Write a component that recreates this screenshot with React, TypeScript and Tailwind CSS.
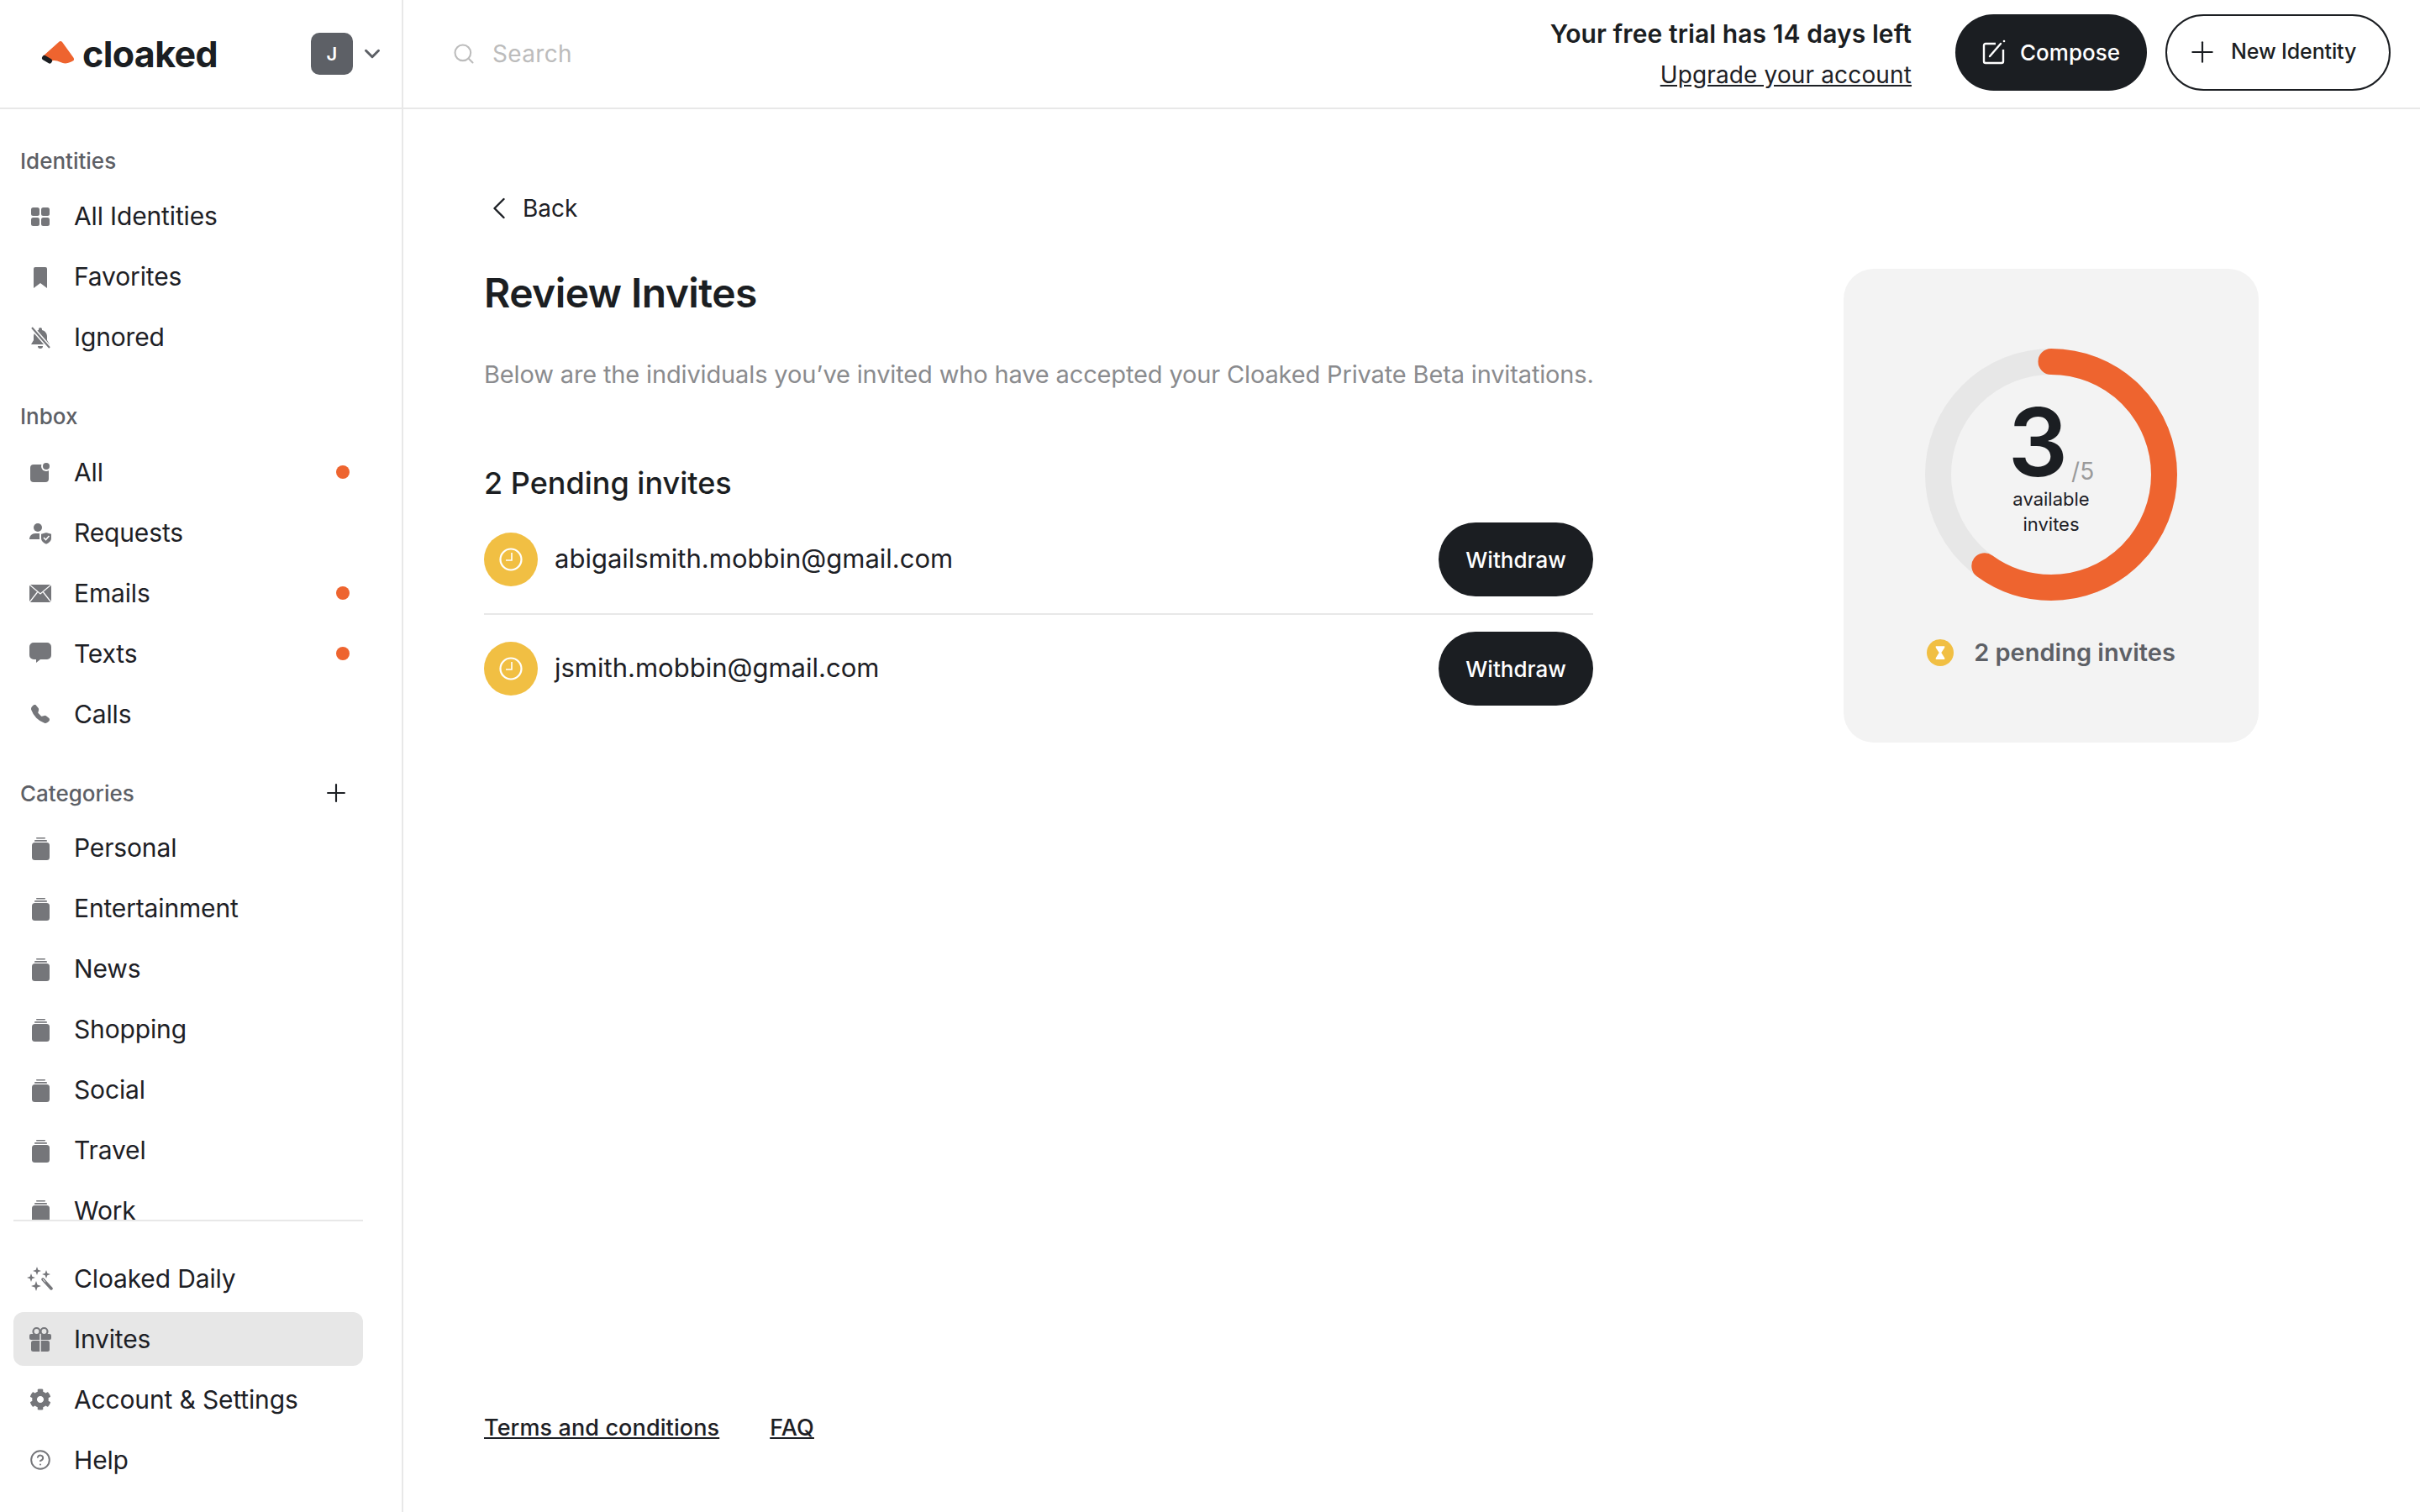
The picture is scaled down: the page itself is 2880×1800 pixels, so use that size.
import { ChevronDown, ChevronLeft, CircleHelp, Plus, Search } from "lucide-react";
import { BsTelephoneFill } from "react-icons/bs";
import { FaCog } from "react-icons/fa";
import type { ReactNode } from "react";

const GridIcon = () => (
  <svg viewBox="0 0 26 32" className="h-8 w-[26px] fill-[#75767a]">
    <rect x="2" y="6" width="10" height="10" rx="2.5" />
    <rect x="14" y="6" width="10" height="10" rx="2.5" />
    <rect x="2" y="18" width="10" height="10" rx="2.5" />
    <rect x="14" y="18" width="10" height="10" rx="2.5" />
  </svg>
);

const BookmarkIcon = () => (
  <svg viewBox="0 0 26 32" className="h-8 w-[26px] fill-[#75767a]">
    <path d="M7 5h12a2 2 0 0 1 2 2v23l-8-6-8 6V7a2 2 0 0 1 2-2z" />
  </svg>
);

const BellOffIcon = () => (
  <svg viewBox="0 0 26 32" className="h-8 w-[26px] fill-[#75767a]">
    <path d="M13 5a2 2 0 0 1 2 2v1c4 1 6 4 6 8v4l3 5H2l3-5v-4c0-4 2-7 6-8V7a2 2 0 0 1 2-2z" />
    <path d="M10 27h6a3 3 0 0 1-6 0z" />
    <path d="M3 5l21 24" stroke="#ffffff" strokeWidth="5" />
    <path d="M3 5l21 24" stroke="#75767a" strokeWidth="2" />
  </svg>
);

const InboxAllIcon = () => (
  <svg viewBox="0 0 26 32" className="h-8 w-[26px] fill-[#75767a]">
    <rect x="1" y="7" width="22" height="21" rx="4" />
    <circle cx="20" cy="9" r="6" fill="#ffffff" />
    <circle cx="20" cy="9" r="4" />
  </svg>
);

const RequestsIcon = () => (
  <svg viewBox="0 0 26 32" className="h-8 w-[26px] fill-[#75767a]">
    <circle cx="10" cy="10" r="5" />
    <path d="M0 24c0-4 3-7 7-7h6c3 0 4 2 4 7z" />
    <path d="M20 15l7 2v6c0 4-3 6-7 8-4-2-7-4-7-8v-6z" stroke="#ffffff" strokeWidth="2" />
    <path d="M17 22l2.500 2.500 4-4.500" fill="none" stroke="#ffffff" strokeWidth="1.600" />
  </svg>
);

const MailIcon = () => (
  <svg viewBox="0 0 26 32" className="h-8 w-[26px] fill-[#75767a]">
    <rect x="0" y="6" width="26" height="21" rx="1.500" />
    <path d="M0 6l13 11L26 6M0 27l9.500-12M26 27l-9.500-12" fill="none" stroke="#ffffff" strokeWidth="1.300" />
  </svg>
);

const BubbleIcon = () => (
  <svg viewBox="0 0 26 32" className="h-8 w-[26px] fill-[#75767a]">
    <path d="M5 3h16a5 5 0 0 1 5 5v10a5 5 0 0 1-5 5H13l-5 4v-4H5a5 5 0 0 1-5-5V8a5 5 0 0 1 5-5z" />
  </svg>
);

const CategoryIcon = () => (
  <svg viewBox="0 0 26 32" className="h-8 w-[26px] fill-[#75767a]">
    <rect x="3" y="10" width="21" height="21" rx="3.500" />
    <rect x="6" y="7" width="15" height="1.800" rx="0.900" />
    <rect x="8" y="4" width="11" height="1.500" rx="0.750" />
  </svg>
);

const WandIcon = () => (
  <svg viewBox="0 0 28 32" className="h-8 w-7 overflow-visible fill-[#75767a]">
    <path d="M10 2l1.300 3.700L15 7l-3.700 1.300L10 12 8.700 8.300 5 7l3.700-1.300z" />
    <path d="M3 10l1.300 3.700L8 15l-3.700 1.300L3 20l-1.300-3.700L-2 15l3.700-1.300z" />
    <path d="M21 6l1.300 3.700L26 11l-3.700 1.300L21 16l-1.300-3.700L16 11l3.700-1.300z" />
    <path d="M9 19l1.500 4.500L15 25l-4.500 1.500L9 31l-1.500-4.500L3 25l4.500-1.500z" />
    <path d="M17 17l10 11" stroke="#75767a" strokeWidth="3.500" strokeLinecap="round" />
    <path d="M17 17l3 3.300" stroke="#ffffff" strokeWidth="1" />
  </svg>
);

const GiftIcon = () => (
  <svg viewBox="0 0 26 32" className="h-8 w-[26px] fill-[#75767a]">
    <circle cx="8.500" cy="7" r="4" fill="none" stroke="#75767a" strokeWidth="2.200" />
    <circle cx="17.500" cy="7" r="4" fill="none" stroke="#75767a" strokeWidth="2.200" />
    <rect x="0" y="10" width="26" height="7" rx="2" />
    <rect x="2" y="18" width="22" height="13" rx="2.500" />
    <path d="M13 10v21" stroke="#e7e7e7" strokeWidth="1.600" />
  </svg>
);

const ClockIcon = () => (
  <svg viewBox="0 0 30 30" className="h-[30px] w-[30px]" fill="none" stroke="#ffffff">
    <circle cx="15" cy="15" r="12.500" strokeWidth="2.200" />
    <path d="M16 7v9H9" strokeWidth="1.600" />
  </svg>
);

const ComposeIcon = () => (
  <svg viewBox="0 0 28 30" className="h-[30px] w-7" fill="none" stroke="#ffffff" strokeWidth="2.400">
    <path d="M16 5H4a2 2 0 0 0-2 2v19a2 2 0 0 0 2 2h19a2 2 0 0 0 2-2V12" />
    <path d="M9 20L22 5" strokeLinecap="round" />
    <circle cx="26" cy="2" r="1.300" fill="#ffffff" stroke="none" />
  </svg>
);

const LogoMark = () => (
  <svg viewBox="0 0 40 30" className="h-[30px] w-10 shrink-0">
    <path d="M22 1C23-.3 25-.3 26 1L39 19C41 22 40 23 38 24 32 27 28 27 24 25 20 23 15 22 13 24L3 18Z" fill="#ee642f" />
    <path d="M5 20l6 3.500" stroke="#1b1e22" strokeWidth="6" strokeLinecap="round" />
  </svg>
);

const NavItem = ({ icon, label, dot, active }: { icon: ReactNode; label: string; dot?: boolean; active?: boolean }) => (
  <div className={`mb-2 ml-4 mr-[46px] flex h-16 items-center gap-[27px] rounded-xl pl-[19px] pr-4 ${active ? "bg-[#e7e7e7]" : ""}`}>
    <span className="flex w-[26px] justify-center">{icon}</span>
    <span className="flex-1 text-[30px] tracking-[-0.005em] text-[#1d2025]">{label}</span>
    {dot && <span className="h-4 w-4 rounded-full bg-[#ee642f]"></span>}
  </div>
);

const SectionLabel = ({ children }: { children: ReactNode }) => (
  <div className="ml-6 flex h-10 items-center text-[26px] font-medium text-[#5d6066]">{children}</div>
);

const categories = ["Personal", "Entertainment", "News", "Shopping", "Social", "Travel", "Work"];
const invites = ["abigailsmith.mobbin@gmail.com", "jsmith.mobbin@gmail.com"];

const Sidebar = () => (
  <aside className="flex w-[480px] shrink-0 flex-col border-r-2 border-[#e8e8e8]">
    <div className="h-[1322px] overflow-hidden pt-[41px]">
      <SectionLabel>Identities</SectionLabel>
      <div className="mt-[14px]">
        <NavItem icon={<GridIcon />} label="All Identities" />
        <NavItem icon={<BookmarkIcon />} label="Favorites" />
        <NavItem icon={<BellOffIcon />} label="Ignored" />
      </div>
      <div className="mt-[42px]">
        <SectionLabel>Inbox</SectionLabel>
      </div>
      <div className="mt-[15px]">
        <NavItem icon={<InboxAllIcon />} label="All" dot />
        <NavItem icon={<RequestsIcon />} label="Requests" />
        <NavItem icon={<MailIcon />} label="Emails" dot />
        <NavItem icon={<BubbleIcon />} label="Texts" dot />
        <NavItem icon={<BsTelephoneFill size={22} color="#75767a" />} label="Calls" />
      </div>
      <div className="mt-[42px] flex items-center justify-between pr-[61px]">
        <SectionLabel>Categories</SectionLabel>
        <Plus size={34} strokeWidth={1.5} color="#1d2025" />
      </div>
      <div className="mt-[13px]">
        {categories.map((name) => (
          <NavItem key={name} icon={<CategoryIcon />} label={name} />
        ))}
      </div>
    </div>
    <div className="ml-4 mr-[46px] h-0.5 bg-[#e8e8e8]"></div>
    <div className="pt-9">
      <NavItem icon={<WandIcon />} label="Cloaked Daily" />
      <NavItem icon={<GiftIcon />} label="Invites" active />
      <NavItem icon={<FaCog size={26} color="#75767a" />} label="Account & Settings" />
      <NavItem icon={<CircleHelp size={36} strokeWidth={1.8} color="#75767a" />} label="Help" />
    </div>
  </aside>
);

const Header = () => (
  <header className="flex h-[130px] shrink-0 border-b-2 border-[#e8e8e8]">
    <div className="flex w-[480px] shrink-0 items-center border-r-2 border-[#e8e8e8] pl-[48px] pr-5">
      <LogoMark />
      <span className="ml-[10px] text-[43px] font-bold tracking-[-0.015em] text-[#1b1e22]">cloaked</span>
      <span className="ml-auto flex h-[50px] w-[50px] items-center justify-center rounded-[10px] bg-[#5d6066] text-[22px] font-semibold text-white">J</span>
      <ChevronDown size={30} strokeWidth={2.4} color="#5d6066" className="ml-2" />
    </div>
    <div className="flex flex-1 items-center pl-[58px] pr-[35px]">
      <Search size={28} strokeWidth={1.8} color="#bcbcbc" />
      <span className="ml-5 text-[28px] tracking-[0.012em] text-[#bcbcbc]">Search</span>
      <div className="ml-auto flex flex-col items-end gap-[11px]">
        <span className="text-[30px] font-semibold leading-[38px] tracking-[0.003em] text-[#1b1e22]">Your free trial has 14 days left</span>
        <span className="text-[28px] leading-[38px] tracking-[0.005em] text-[#1d2025] underline">Upgrade your account</span>
      </div>
      <button className="mb-1 ml-[52px] flex h-[91px] w-[228px] items-center justify-center gap-[17px] rounded-full bg-[#1b1e22] text-[26px] font-medium text-white">
        <ComposeIcon />
        Compose
      </button>
      <button className="mb-1 ml-[22px] flex h-[91px] w-[268px] items-center gap-[14px] rounded-full border-2 border-[#1b1e22] pl-[22px] text-[25px] font-medium tracking-[-0.005em] text-[#1b1e22]">
        <Plus size={40} strokeWidth={1.3} />
        New Identity
      </button>
    </div>
  </header>
);

const InviteRow = ({ email, first }: { email: string; first?: boolean }) => (
  <div className={`flex items-center ${first ? "border-b-2 border-[#e8e8e8] pb-5" : "pt-5"}`}>
    <span className="flex h-16 w-16 items-center justify-center rounded-full bg-[#f1bf43]">
      <ClockIcon />
    </span>
    <span className="mb-[2px] ml-5 flex-1 text-[31px] text-[#1d2025]">{email}</span>
    <button className="h-[88px] w-[184px] rounded-full bg-[#1b1e22] text-[26px] font-medium text-white">Withdraw</button>
  </div>
);

const InviteCard = () => (
  <div className="mt-[92px] flex h-[564px] w-[494px] flex-col items-center rounded-[36px] bg-[#f3f3f3] pt-[95px]">
    <div className="relative h-[300px] w-[300px]">
      <svg viewBox="0 0 300 300" className="absolute inset-0 h-full w-full -rotate-90" fill="none" strokeWidth="31">
        <circle cx="150" cy="150" r="134.500" stroke="#e7e7e7" />
        <circle cx="150" cy="150" r="134.500" stroke="#ee642f" strokeLinecap="round" strokeDasharray="507 845" />
      </svg>
      <div className="absolute inset-0 flex flex-col items-center pt-[58px]">
        <div className="flex h-[106px] items-end">
          <span className="text-[112px] font-semibold leading-[106px] text-[#1b1e22]">3</span>
          <span className="mb-[2px] ml-1 text-[28px] leading-8 text-[#9a9a9a]">/5</span>
        </div>
        <span className="text-[22px] leading-[30px] text-[#1d2025]">available</span>
        <span className="text-[22px] leading-[30px] text-[#1d2025]">invites</span>
      </div>
    </div>
    <div className="mt-[42px] flex h-10 items-center">
      <span className="flex h-8 w-8 items-center justify-center rounded-full bg-[#f1bf43]">
        <svg viewBox="0 0 16 20" className="h-[18px] w-[14px] fill-white">
          <path d="M2 1h12v2l-4.500 7L14 17v2H2v-2l4.500-7L2 3z" />
        </svg>
      </span>
      <span className="ml-6 text-[29px] font-semibold text-[#5d6066]">2 pending invites</span>
    </div>
  </div>
);

const App = () => {
  return (
    <div className="flex h-screen w-full flex-col overflow-hidden bg-white font-['Inter',sans-serif]">
      <Header />
      <div className="flex min-h-0 flex-1">
        <Sidebar />
        <main className="flex flex-1 flex-col justify-between pb-[80px] pl-[96px] pt-[98px]">
          <div className="flex">
            <div className="w-[1320px]">
              <div className="-ml-1 flex h-10 items-center gap-[6px] text-[28px] text-[#1d2025]">
                <ChevronLeft size={44} strokeWidth={1.3} />
                Back
              </div>
              <h1 className="mt-[49px] h-16 text-[48px] font-semibold leading-[64px] tracking-[-0.012em] text-[#1b1e22]">Review Invites</h1>
              <p className="mt-[45px] h-10 whitespace-nowrap text-[29px] leading-10 tracking-[-0.005em] text-[#8a8b8e]">
                Below are the individuals you’ve invited who have accepted your Cloaked Private Beta invitations.
              </p>
              <h2 className="mt-[85px] h-12 text-[36px] font-medium leading-[48px] text-[#1b1e22]">2 Pending invites</h2>
              <div className="mt-[23px]">
                {invites.map((email, i) => (
                  <InviteRow key={email} email={email} first={i === 0} />
                ))}
              </div>
            </div>
            <div className="ml-[298px]">
              <InviteCard />
            </div>
          </div>
          <div className="flex gap-[60px] text-[27px] font-medium leading-10 tracking-[0.004em] text-[#1d2025] underline">
            <span>Terms and conditions</span>
            <span>FAQ</span>
          </div>
        </main>
      </div>
    </div>
  );
};

export default App;
